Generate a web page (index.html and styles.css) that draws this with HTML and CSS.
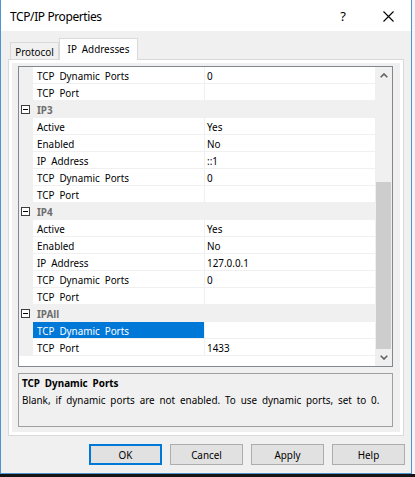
FILE: index.html
```html
<!DOCTYPE html>
<html>
<head>
<meta charset="utf-8">
<link rel="stylesheet" href="styles.css">
</head>
<body>
<div class="window">
  <div class="titlebar">
    <span class="title">TCP/IP Properties</span>
    <span class="help">?</span>
    <span class="close"><svg width="11" height="11" viewBox="0 0 11 11"><path d="M0.5 0.5 L10.5 10.5 M10.5 0.5 L0.5 10.5" stroke="#000" stroke-width="1.1" fill="none"/></svg></span>
  </div>
  <div class="client">
    <div class="tabs">
      <div class="tab">Protocol</div>
      <div class="tab active">IP Addresses</div>
    </div>
    <div class="panel">
      <div class="panel-inner">
        <div class="pg">
          <div class="pg-body">
            <div class="row"><div class="gutter"></div><div class="name">TCP Dynamic Ports</div><div class="value">0</div></div>
            <div class="row"><div class="gutter"></div><div class="name">TCP Port</div><div class="value"></div></div>
            <div class="row cat"><span class="box"><span class="minus"></span></span><span class="cat-label">IP3</span></div>
            <div class="row"><div class="gutter"></div><div class="name">Active</div><div class="value">Yes</div></div>
            <div class="row"><div class="gutter"></div><div class="name">Enabled</div><div class="value">No</div></div>
            <div class="row"><div class="gutter"></div><div class="name">IP Address</div><div class="value">::1</div></div>
            <div class="row"><div class="gutter"></div><div class="name">TCP Dynamic Ports</div><div class="value">0</div></div>
            <div class="row"><div class="gutter"></div><div class="name">TCP Port</div><div class="value"></div></div>
            <div class="row cat"><span class="box"><span class="minus"></span></span><span class="cat-label">IP4</span></div>
            <div class="row"><div class="gutter"></div><div class="name">Active</div><div class="value">Yes</div></div>
            <div class="row"><div class="gutter"></div><div class="name">Enabled</div><div class="value">No</div></div>
            <div class="row"><div class="gutter"></div><div class="name">IP Address</div><div class="value">127.0.0.1</div></div>
            <div class="row"><div class="gutter"></div><div class="name">TCP Dynamic Ports</div><div class="value">0</div></div>
            <div class="row"><div class="gutter"></div><div class="name">TCP Port</div><div class="value"></div></div>
            <div class="row cat"><span class="box"><span class="minus"></span></span><span class="cat-label">IPAll</span></div>
            <div class="row"><div class="gutter"></div><div class="name selected">TCP Dynamic Ports</div><div class="value"></div></div>
            <div class="row"><div class="gutter"></div><div class="name">TCP Port</div><div class="value">1433</div></div>
          </div>
          <div class="sb">
            <div class="sb-btn"><svg width="8" height="5" viewBox="0 0 8 5"><polyline points="0.7,4.3 4,1 7.3,4.3" fill="none" stroke="#606060" stroke-width="1.6"/></svg></div>
            <div class="sb-space"></div>
            <div class="thumb"></div>
            <div class="sb-btn"><svg width="8" height="5" viewBox="0 0 8 5"><polyline points="0.7,0.7 4,4 7.3,0.7" fill="none" stroke="#606060" stroke-width="1.6"/></svg></div>
          </div>
        </div>
        <div class="desc">
          <div class="desc-title">TCP Dynamic Ports</div>
          <div class="desc-text">Blank, if dynamic ports are not enabled. To use dynamic ports, set to 0.</div>
        </div>
      </div>
    </div>
    <div class="buttons">
      <button class="btn default">OK</button>
      <button class="btn">Cancel</button>
      <button class="btn">Apply</button>
      <button class="btn">Help</button>
    </div>
  </div>
</div>
</body>
</html>
```

FILE: styles.css
```css
html, body {
  margin: 0;
  padding: 0;
}
body {
  width: 415px;
  height: 477px;
  overflow: hidden;
  background: linear-gradient(to bottom, #f2f4f7 0, #f2f4f7 474px, #141414 474px);
  font-family: "Noto Sans", "Liberation Sans", sans-serif;
  font-size: 9.9px;
  word-spacing: 2.3px;
  color: #000;
}
.window {
  width: 410px;
  height: 473px;
  border: 1px solid #4f93d0;
  border-top: none;
  background: #f0f0f0;
  display: flex;
  flex-direction: column;
}
.titlebar {
  height: 31px;
  flex: none;
  background: #fff;
  display: flex;
  align-items: center;
  word-spacing: normal;
}
.title {
  flex: 1;
  padding-left: 9px;
  padding-top: 2px;
  font-size: 12px;
  letter-spacing: -0.4px;
}
.help {
  width: 24px;
  margin-right: 10px;
  text-align: center;
  font-size: 13px;
  padding-top: 1px;
}
.close {
  width: 46px;
  height: 31px;
  display: flex;
  align-items: center;
  justify-content: center;
  padding-top: 2px;
  box-sizing: border-box;
}
.client {
  flex: 1;
  display: flex;
  flex-direction: column;
}
.tabs {
  height: 28px;
  flex: none;
  display: flex;
  align-items: flex-end;
  padding-left: 9px;
}
.tab {
  box-sizing: border-box;
  width: 49px;
  height: 17px;
  border: 1px solid #d9d9d9;
  border-bottom: none;
  background: #f0f0f0;
  text-align: center;
  line-height: 18px;
}
.tab.active {
  width: 79px;
  height: 22px;
  margin-bottom: -1px;
  background: #fff;
  position: relative;
  z-index: 1;
  line-height: 21px;
}
.panel {
  box-sizing: border-box;
  margin-left: 7px;
  width: 396px;
  height: 377px;
  flex: none;
  border: 1px solid #d9d9d9;
  background: #fff;
  padding: 3px;
}
.panel-inner {
  height: 100%;
  box-sizing: border-box;
  background: #f0f0f0;
  padding: 3px 7px 5px 6px;
  display: flex;
  flex-direction: column;
  gap: 6px;
}
.pg {
  box-sizing: border-box;
  width: 375px;
  height: 301px;
  flex: none;
  border: 1px solid #828790;
  display: flex;
  background: #fff;
}
.pg-body {
  flex: 1;
  background: #fff;
  overflow: hidden;
}
.row {
  box-sizing: border-box;
  height: 17px;
  border-bottom: 1px solid #f0f0f0;
  display: flex;
  line-height: 18px;
  white-space: nowrap;
}
.gutter {
  width: 14px;
  flex: none;
  background: #f0f0f0;
}
.name {
  box-sizing: border-box;
  width: 172px;
  flex: none;
  padding-left: 4px;
  border-right: 1px solid #f0f0f0;
}
.name.selected {
  background: #0078d7;
  color: #fff;
}
.value {
  flex: 1;
  padding-left: 2px;
}
.row.cat {
  background: #f0f0f0;
  align-items: center;
}
.box {
  box-sizing: border-box;
  width: 9px;
  height: 9px;
  margin-left: 2px;
  border: 1px solid #3c3c3c;
  background: #fff;
  display: flex;
  align-items: center;
  justify-content: center;
}
.minus {
  width: 5px;
  height: 1px;
  background: #000;
}
.cat-label {
  margin-left: 7px;
  padding-top: 1px;
  font-weight: bold;
  color: #6d6d6d;
}
.sb {
  width: 17px;
  flex: none;
  background: #f0f0f0;
  display: flex;
  flex-direction: column;
}
.sb-btn {
  height: 17px;
  flex: none;
  display: flex;
  align-items: center;
  justify-content: center;
}
.sb-space {
  height: 98px;
  flex: none;
}
.thumb {
  height: 167px;
  flex: none;
  margin: 0 1px;
  background: #cdcdcd;
}
.desc {
  box-sizing: border-box;
  height: 54px;
  flex: none;
  border: 1px solid #a0a0a0;
  background: #f0f0f0;
  padding: 1px 3px;
}
.desc-title {
  font-weight: bold;
  line-height: 16px;
}
.desc-text {
  margin-top: 1px;
  line-height: 16px;
  white-space: nowrap;
}
.buttons {
  margin-top: 8px;
  display: flex;
  justify-content: flex-end;
  gap: 8px;
  padding-right: 6px;
}
.btn {
  box-sizing: border-box;
  width: 73px;
  height: 21px;
  border: 1px solid #adadad;
  background: #e1e1e1;
  font-family: "Noto Sans", "Liberation Sans", sans-serif;
  font-size: 9.9px;
  color: #000;
  padding: 1px 0 0;
  margin: 0;
}
.btn.default {
  border: 2px solid #0078d7;
}
```
